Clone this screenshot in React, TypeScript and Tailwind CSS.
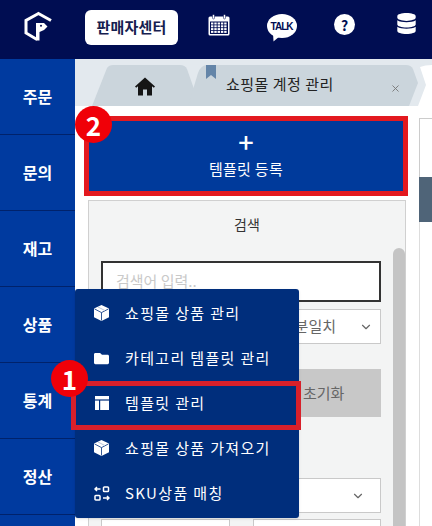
import { FaDatabase, FaFolder } from "react-icons/fa";
import { ChevronDown, X } from "lucide-react";

const font = "font-['Noto_Sans_CJK_KR','Noto_Sans',sans-serif]";

function Logo() {
  return (
    <svg width="30" height="32" viewBox="23 10 30 32" fill="none">
      <path d="M38.5 13.5L26 20.5V33L37 39.5" stroke="#fff" strokeWidth="3" />
      <path d="M37.5 13L51 20.5" stroke="#fff" strokeWidth="3" />
      <path d="M36 23H44L47.5 26.5L44 30L39.5 32V40.5H36Z" fill="#fff" />
      <circle cx="41" cy="25.7" r="1" fill="#000d52" />
    </svg>
  );
}

function Cube() {
  return (
    <svg width="15" height="16" viewBox="0 0 15 16">
      <path d="M7.5 0L15 3.6V12.2L7.5 16L0 12.2V3.6Z" fill="#fff" />
      <path d="M0.5 3.9L7.5 7.6L14.5 3.9M7.5 7.6V15.5" fill="none" stroke="#002e7c" strokeWidth="0.8" />
      <path d="M4 2L11 5.6" stroke="#b9c6dc" strokeWidth="1" />
    </svg>
  );
}

function Calendar() {
  return (
    <svg width="22" height="22" viewBox="0 0 22 22">
      <rect x="0.5" y="2.5" width="21" height="19" rx="1.5" fill="#fff" />
      <rect x="2" y="7.5" width="18" height="12.5" fill="#000d52" />
      {[0, 1, 2, 3].map((r) =>
        [0, 1, 2, 3, 4].map((c) => (
          <rect key={`${r}-${c}`} x={3 + c * 3.3} y={8.5 + r * 2.8} width="2.4" height="2" fill="#fff" />
        )),
      )}
      <rect x="4.5" y="0.5" width="2" height="4.5" rx="1" fill="#fff" stroke="#000d52" strokeWidth="0.5" />
      <rect x="15.5" y="0.5" width="2" height="4.5" rx="1" fill="#fff" stroke="#000d52" strokeWidth="0.5" />
    </svg>
  );
}

function Talk() {
  return (
    <svg width="30" height="28" viewBox="0 0 30 28">
      <ellipse cx="15" cy="12" rx="15" ry="12" fill="#fff" />
      <path d="M6 19l0.5 8.5L13 22z" fill="#fff" />
      <text x="15" y="15.5" textAnchor="middle" fontSize="10" fontWeight="700" fill="#000d52" fontFamily="Liberation Sans" textLength="23">TALK</text>
    </svg>
  );
}

function Home() {
  return (
    <svg width="20" height="19" viewBox="0 0 20 19" fill="#151515">
      <path d="M10 0.5L0 9.5L1.2 10.8L3 9.3V18.5H8V12.5H12V18.5H17V9.3L18.8 10.8L20 9.5Z" />
    </svg>
  );
}

function TemplateIcon() {
  return (
    <svg width="14" height="14" viewBox="0 0 14 14" fill="#fff">
      <rect x="0" y="0" width="14" height="3.4" />
      <rect x="0" y="4.6" width="4" height="9.4" />
      <rect x="5.2" y="4.6" width="8.8" height="9.4" />
    </svg>
  );
}

function SkuIcon() {
  return (
    <svg width="16" height="15" viewBox="0 0 16 15" fill="none" stroke="#fff" strokeWidth="1.5">
      <rect x="9.5" y="1" width="5" height="4.5" rx="0.8" />
      <rect x="1" y="9.5" width="5" height="4.5" rx="0.8" />
      <path d="M6.5 3H1M3 1L1 3l2 2" />
      <path d="M9 12h6M13 10l2 2-2 2" />
    </svg>
  );
}

const side = ["주문", "문의", "재고", "상품", "통계", "정산"];

const menu = [
  { icon: <Cube />, label: "쇼핑몰 상품 관리" },
  { icon: <FaFolder size={15} color="#fff" />, label: "카테고리 템플릿 관리" },
  { icon: <TemplateIcon />, label: "템플릿 관리" },
  { icon: <Cube />, label: "쇼핑몰 상품 가져오기" },
  { icon: <SkuIcon />, label: "SKU상품 매칭" },
];

function Badge({ n, className }: { n: string; className: string }) {
  return (
    <div className={`absolute z-30 flex h-[37px] w-[37px] items-center justify-center rounded-full bg-[#f00008] text-[26px] font-bold leading-none text-white ${className}`}>
      {n}
    </div>
  );
}

export default function App() {
  return (
    <div className={`relative flex h-[526px] w-[432px] flex-col overflow-hidden bg-white ${font}`}>
      <header className="flex h-[59px] shrink-0 items-start bg-[#000d52]">
        <div className="ml-[23px] mt-[10px]"><Logo /></div>
        <div className="ml-[32px] mt-[10px] flex h-[35px] w-[93px] items-center justify-center rounded-md bg-white text-[15px] font-bold tracking-[0.2px] text-[#16204f]">판매자센터</div>
        <div className="ml-[30px] mt-[14px]"><Calendar /></div>
        <div className="ml-[37px] mt-[14px]"><Talk /></div>
        <div className="ml-[37px] mt-[14px] flex h-[21px] w-[21px] items-center justify-center rounded-full bg-white text-[14px] font-bold leading-none text-[#000d52]">?</div>
        <div className="ml-[41px] mt-[13px]"><FaDatabase size={21} color="#fff" /></div>
      </header>

      <div className="flex min-h-0 flex-1">
        <nav className="w-[75px] shrink-0 bg-[#003a9f]">
          {side.map((s) => (
            <div key={s} className="flex h-[76px] items-center justify-center border-b border-[#00226b] pb-[1px] text-[16px] font-bold text-white">
              {s}
            </div>
          ))}
        </nav>

        <main className="min-w-0 flex-1">
          <div className="relative h-[47px] bg-[#e3e9ee]">
            <svg className="absolute inset-0" width="357" height="47" viewBox="0 0 357 47">
              <path d="M17 47L32 9Q34 6 38 6H105Q110 6 112 10L125 47Z" fill="#cbd5dc" />
              <path d="M113 47L123 14Q126 6 132 6H331Q336 6 338 10L343 24L334 47Z" fill="#cbd5dc" />
              <path d="M343 47L351 26L345 8Q350 6 357 6V47Z" fill="#fff" />
              <path d="M131 6V20L136 16L141 20V6Z" fill="#6485a8" />
            </svg>
            <div className="absolute left-[60px] top-[18px]"><Home /></div>
            <div className="absolute left-[151px] top-[13px] text-[15px] leading-[24px] tracking-[0.5px] text-[#222]">쇼핑몰 계정 관리</div>
            <X className="absolute left-[315px] top-[24px]" size={11} color="#777" />
          </div>

          <div className="flex">
            <div className="w-[344px] shrink-0">
              <div className="mx-[9px] mt-[10px] flex h-[80px] w-[324px] flex-col items-center justify-center border-[5px] border-[#e3191f] bg-[#003a9b] pb-[6px] text-white">
                <div className="text-[27px] font-medium leading-[28px]">+</div>
                <div className="mt-[3px] text-[15px] leading-[20px] tracking-[0.3px]">템플릿 등록</div>
              </div>
              <div className="ml-[13px] mt-[4px] h-[340px] w-[318px] border border-[#d0d0d0] bg-[#f3f4f4] pl-[12px] pt-[12px]">
                <div className="pr-[12px] text-center text-[14px] leading-[22px] text-[#333]">검색</div>
                <div className="flex">
                  <div className="w-[280px] shrink-0 pt-[26px]">
                    <div className="flex h-[41px] items-center border-2 border-[#333] bg-white px-[13px] text-[15px] text-[#c9c9c9]">검색어 입력..</div>
                    <div className="mt-[7px] flex h-[35px] items-center justify-end gap-[23px] border border-[#c9c9c9] bg-white pr-[7px] text-[15px] text-[#666]">
                      <span>부분일치</span>
                      <ChevronDown size={14} color="#666" />
                    </div>
                    <div className="mt-[25px] flex h-[48px] justify-end bg-[#c8c8c8]">
                      <div className="flex w-[78px] items-center text-[15px] text-[#666]">초기화</div>
                    </div>
                    <div className="mt-[61px] flex h-[35px] items-center justify-end border border-[#c9c9c9] bg-white pr-[15px]">
                      <ChevronDown size={14} color="#666" />
                    </div>
                    <div className="mt-[6px] flex gap-[23px]">
                      <div className="h-[30px] flex-1 border border-[#c9c9c9] bg-white" />
                      <div className="h-[30px] flex-1 border border-[#c9c9c9] bg-white" />
                    </div>
                  </div>
                  <div className="ml-[12px] mt-[13px] h-[300px] w-[12px] shrink-0 rounded-t-md bg-[#c4c4c4]" />
                </div>
              </div>
            </div>
            <div className="min-w-0 flex-1 pt-[12px]">
              <div className="h-[59px] border-l border-t border-[#ccc] bg-white" />
              <div className="h-[45px] bg-[#4f6478]" />
              <div className="h-[304px] border-l border-[#ddd]" />
            </div>
          </div>
        </main>
      </div>

      <div className="absolute left-[75px] top-[289px] z-10 w-[224px] rounded-[3px] bg-[#002e7c] shadow-sm">
        <div className="py-[2px]">
          {menu.map((m) => (
            <div key={m.label} className="flex h-[45px] items-center pb-[1px] text-[15px] tracking-[1.35px] text-white">
              <div className="flex w-[50px] justify-center pl-[3px]">{m.icon}</div>
              <span>{m.label}</span>
            </div>
          ))}
        </div>
      </div>
      <div className="absolute left-[71px] top-[381px] z-20 h-[49px] w-[230px] border-[5px] border-[#d8202a]" />
      <Badge n="1" className="left-[51px] top-[360px]" />
      <Badge n="2" className="left-[75px] top-[106px]" />
    </div>
  );
}
